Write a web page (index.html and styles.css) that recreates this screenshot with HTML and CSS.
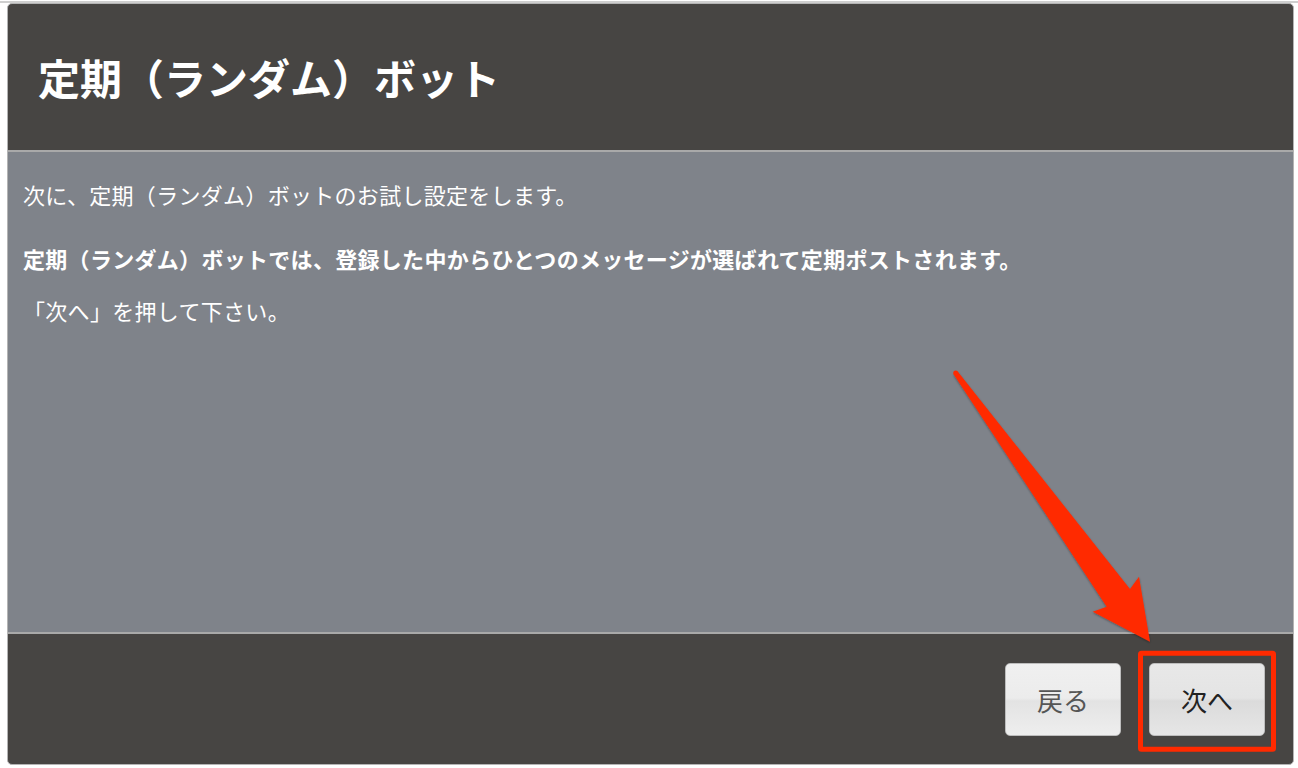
FILE: index.html
```html
<!DOCTYPE html>
<html>
<head>
    <title>定期（ランダム）ボット</title>
    <link rel="stylesheet" href="styles.css">
</head>
<body>
    <div class="topline"></div>
    <div class="page">
        <div class="dialog">
            <div class="dialog-header">
                <h1 class="dialog-title">定期（ランダム）ボット</h1>
            </div>
            <div class="dialog-body">
                <p class="intro">次に、定期（ランダム）ボットのお試し設定をします。</p>
                <p class="note">定期（ランダム）ボットでは、登録した中からひとつのメッセージが選ばれて定期ポストされます。</p>
                <p class="hint">「次へ」を押して下さい。</p>
            </div>
            <div class="dialog-footer">
                <button class="btn">戻る</button>
                <button class="btn btn-next">次へ</button>
            </div>
        </div>
    </div>

    <svg class="markup" width="1298" height="768" viewBox="0 0 1298 768">
        <defs>
            <filter id="shade" x="-10%" y="-10%" width="120%" height="120%">
                <feDropShadow dx="0" dy="1" stdDeviation="1.2" flood-color="#000" flood-opacity="0.35"/>
            </filter>
        </defs>
        <polygon filter="url(#shade)" fill="#ff2a00"
            points="953.7,374.5 1106.7,606.7 1092.7,611.7 1150,641.7 1139,576.7 1130,589 957.7,371.5"/>
        <circle cx="955.7" cy="373" r="2.5" fill="#ff2a00"/>
        <rect x="1140.5" y="653.2" width="133" height="96" rx="1" fill="none" stroke="#ff2a00" stroke-width="5"/>
    </svg>
</body>
</html>
```

FILE: styles.css
```css
body {
    margin: 0;
    background-color: white;
    font-family: "Noto Sans CJK JP", "Noto Sans", sans-serif;
}
.topline {
    margin-top: 1px;
    height: 2px;
    background-color: #cfcfcf;
}
.page {
    padding: 0 4px 3px 7px;
}
.dialog {
    height: 762px;
    box-sizing: border-box;
    border: 1px solid #b4b4b4;
    border-radius: 5px;
    overflow: hidden;
    display: flex;
    flex-direction: column;
    background-color: #474543;
}
.dialog-header {
    height: 146px;
    display: flex;
    align-items: center;
    padding-left: 30px;
    border-bottom: 2px solid #a9a9a9;
}
.dialog-title {
    margin: 0;
    color: white;
    font-size: 42px;
    font-weight: bold;
    line-height: 1;
}
.dialog-body {
    height: 482px;
    box-sizing: border-box;
    background-color: #7f838a;
    padding: 26px 15px;
    color: white;
    font-size: 22px;
    letter-spacing: 0.3px;
    line-height: 32px;
    border-bottom: 2px solid #a9a9a9;
}
.dialog-body p {
    margin: 0;
}
.intro {
    margin-bottom: 32px !important;
}
.note {
    font-weight: bold;
    margin-bottom: 20px !important;
}
.dialog-footer {
    flex: 1;
    display: flex;
    justify-content: flex-end;
    gap: 28px;
    padding: 29px 28px 0 0;
}
.btn {
    width: 116px;
    height: 73px;
    border: 1px solid #bdbdbd;
    border-radius: 5px;
    background: linear-gradient(#f0f0f0 0%, #ececec 48%, #e3e3e3 52%, #eeeeee 100%);
    color: #555;
    font-family: "Noto Sans CJK JP", "Noto Sans", sans-serif;
    font-size: 26px;
    padding: 0;
}
.btn-next {
    background: linear-gradient(#e8e8e8 0%, #e4e4e4 48%, #dbdbdb 52%, #e6e6e6 100%);
    color: #222;
}
.markup {
    position: absolute;
    left: 0;
    top: 0;
    pointer-events: none;
}
```
